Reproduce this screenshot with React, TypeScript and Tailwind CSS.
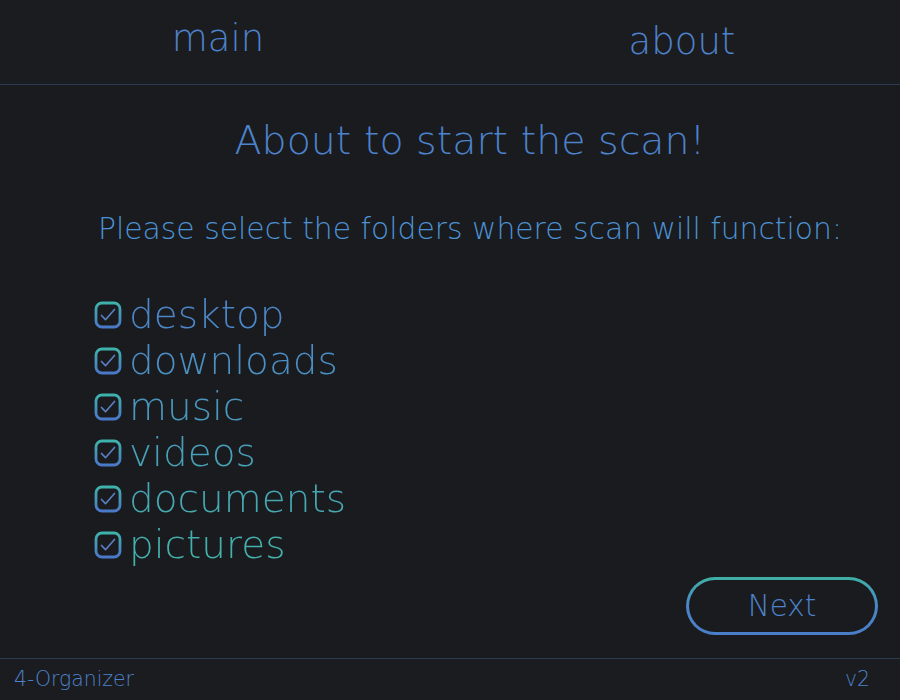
import { useState } from 'react'

const folders = ['desktop', 'downloads', 'music', 'videos', 'documents', 'pictures']

function CheckIcon({ id }: { id: string }) {
  return (
    <svg width="28" height="28" viewBox="0 0 28 28" fill="none" className="shrink-0">
      <defs>
        <linearGradient id={id} x1="0" y1="0" x2="0" y2="1">
          <stop offset="0" stopColor="#3fb2ab" />
          <stop offset="1" stopColor="#4a78c8" />
        </linearGradient>
      </defs>
      <rect x="2" y="2" width="24" height="24" rx="6" stroke={`url(#${id})`} strokeWidth="2.8" />
      <path d="M7.5 14.5l4 4.2L20.5 8.5" stroke="#5a7fc0" strokeWidth="1.7" strokeLinecap="round" strokeLinejoin="round" />
    </svg>
  )
}

export default function App() {
  const [checked] = useState(folders.map(() => true))

  return (
    <div
      className="w-[900px] h-[700px] flex flex-col bg-[#191b1f] text-[#4d82cc]"
      style={{ fontFamily: '"DejaVu Sans", "Liberation Sans", sans-serif' }}
    >
      {/* 顶部导航 */}
      <div className="h-[85px] shrink-0 grid grid-cols-2 bg-[#1b1c1f] border-b border-[#2c3a52]">
        <div className="flex items-center justify-center pb-[6px] pr-[14px] text-[37px] font-extralight">main</div>
        <div className="flex items-center justify-center pl-[14px] text-[37px] font-extralight">about</div>
      </div>

      {/* 主内容 */}
      <div className="flex-1 flex flex-col pl-[40px]">
        <h1 className="mt-[33px] text-center text-[39.5px] leading-[44px] font-extralight">About to start the scan!</h1>
        <p className="mt-[50px] text-center text-[29.8px] leading-[34px] font-extralight text-[#4d92d4]">
          Please select the folders where scan will function:
        </p>

        <div className="mt-[46px] ml-[54px] flex flex-col">
          {folders.map((f, i) => (
            <div key={f} className="flex items-center gap-[7px] h-[46px]">
              {checked[i] && <CheckIcon id={`cg${i}`} />}
              <span
                className="text-[39px] leading-[46px] font-extralight bg-clip-text text-transparent"
                style={{
                  backgroundImage: 'linear-gradient(to bottom, #4d82cc, #44b4a9)',
                  backgroundSize: '100% 276px',
                  backgroundPosition: `0 -${i * 46}px`,
                }}
              >
                {f}
              </span>
            </div>
          ))}
        </div>

        <div className="mt-[9px] flex justify-end pr-[22px]">
          <div className="rounded-full p-[3px] bg-gradient-to-b from-[#3fb0a4] via-[#4a86c8] to-[#4a7ec8]">
            <button className="w-[186px] h-[52px] rounded-full bg-[#191b1f] text-[29.5px] font-extralight text-[#4d82cc]">
              Next
            </button>
          </div>
        </div>
      </div>

      {/* 底部 */}
      <div className="h-[42px] shrink-0 flex items-center justify-between pl-[14px] pr-[30px] bg-[#1b1c1f] border-t border-[#2c3a52] text-[20.4px] font-extralight">
        <span>4-Organizer</span>
        <span>v2</span>
      </div>
    </div>
  )
}
